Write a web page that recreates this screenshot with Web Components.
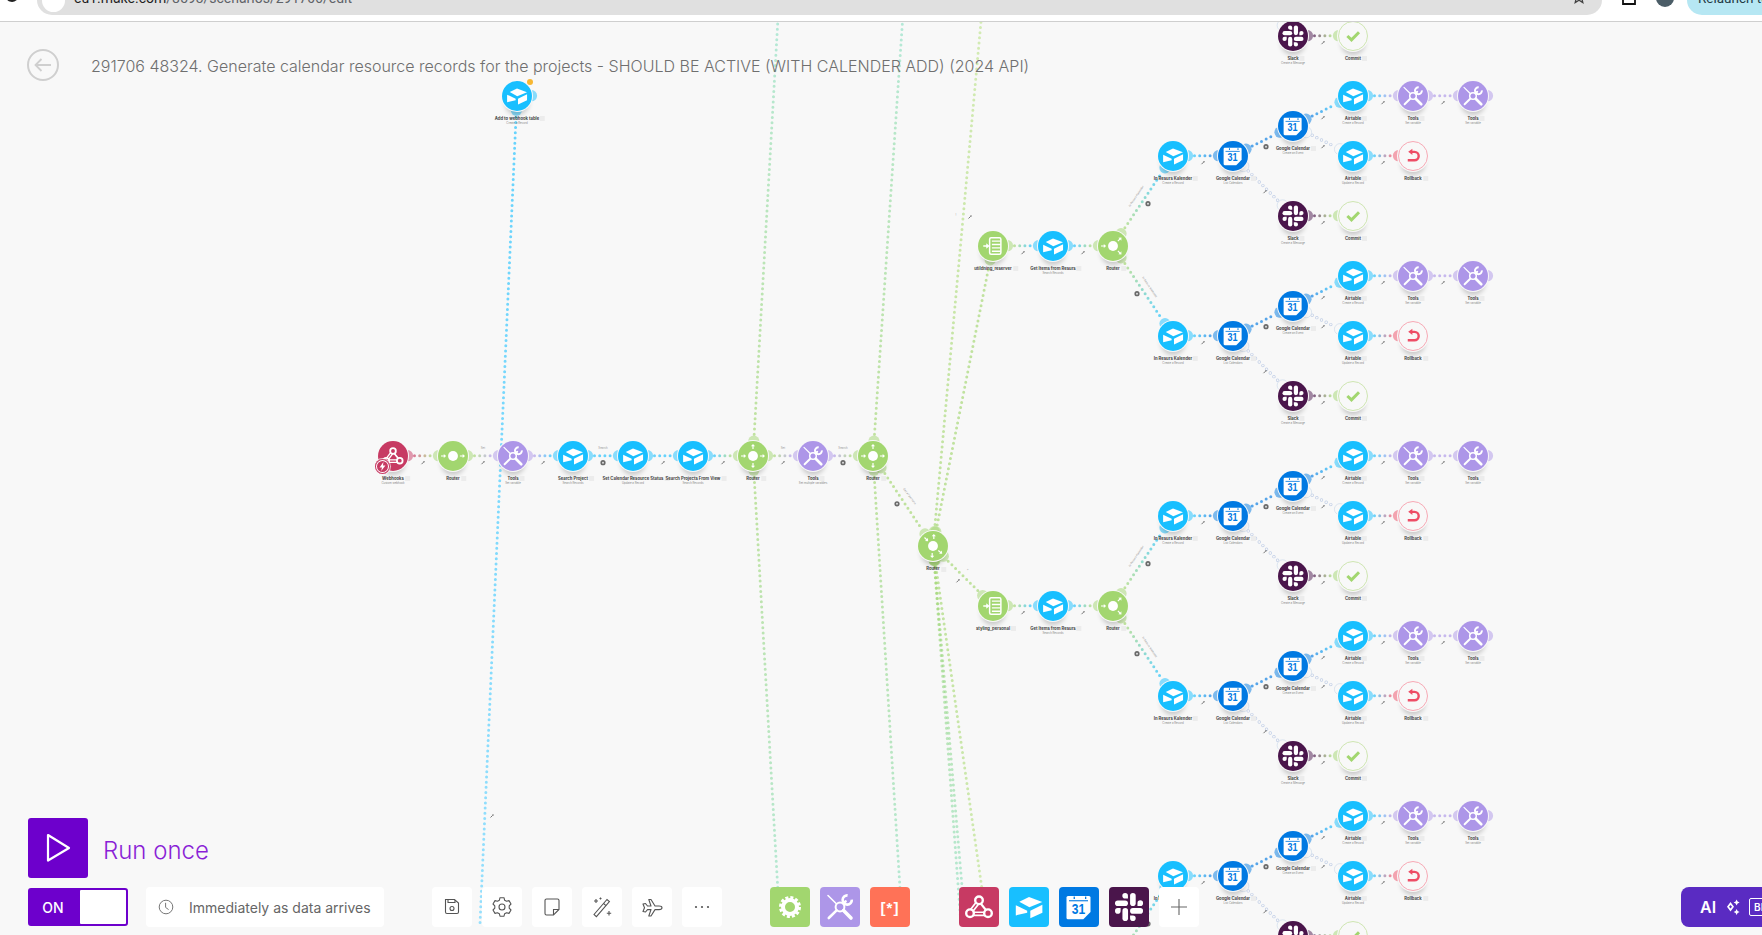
<!DOCTYPE html>
<html>
	<head>
		<meta charset="utf-8">
		<title>Scenario editor</title>
		<style type="text/css">
			html, body {
				margin: 0;
				height: 100%;
				overflow: hidden;
				background: #f8f8f8;
			}
			body {
				display: flex;
				flex-direction: column;
				font-family: Inter, "Liberation Sans", sans-serif;
			}
		</style>
	</head>
	<body>

		<browser-strip url="eu1.make.com" path="/8593/scenarios/291706/edit"></browser-strip>

		<scenario-editor>
			<flow-canvas slot="canvas"></flow-canvas>
			<editor-title slot="header">291706 48324. Generate calendar resource records for the projects - SHOULD BE ACTIVE (WITH CALENDER ADD) (2024 API)</editor-title>
			<run-once slot="run">Run once</run-once>
			<schedule-toggle>ON</schedule-toggle>
			<schedule-box>Immediately as data arrives</schedule-box>
			<tool-tile kind="save" style="margin-left: 38px"></tool-tile>
			<tool-tile kind="settings"></tool-tile>
			<tool-tile kind="note"></tool-tile>
			<tool-tile kind="wand"></tool-tile>
			<tool-tile kind="plane"></tool-tile>
			<tool-tile kind="more"></tool-tile>
			<module-tile kind="gear" style="margin-left: 38px"></module-tile>
			<module-tile kind="tools"></module-tile>
			<module-tile kind="json"></module-tile>
			<module-tile kind="hook" style="margin-left: 39px"></module-tile>
			<module-tile kind="air"></module-tile>
			<module-tile kind="gcal"></module-tile>
			<module-tile kind="slack"></module-tile>
			<tool-tile kind="plus"></tool-tile>
			<ai-button>AI</ai-button>
		</scenario-editor>


		<script>
			const FONT = 'Inter, "Liberation Sans", sans-serif';

			// Module colours
			const COLORS = {
				air: '#18bfff',
				gcal: '#0079e2',
				slack: '#4a154b',
				tools: '#ad96e8',
				router: '#a2d66f',
				agg: '#a2d66f',
				gear: '#a2d66f',
				commit: '#a2d66f',
				rollback: '#ee4d66',
				hook: '#c73a63',
				json: '#ff7257'
			};

			// Module icons, all on a 40 unit box
			const ICONS = {
				air: `<g fill="#fff">
					<path d="M20 10 33.3 15 20.4 20.3 10.3 14.7z"/>
					<path d="M6.8 18.2 18.2 23.8V25.7L6.8 28.4z"/>
					<path d="M21.3 23.8 33.4 17.8V25.8L21.3 31.2z"/>
				</g>`,
				gcal: `<path fill="#fff" d="M9 9H30A1.5 1.5 0 0 1 31.5 10.5V25L24.3 32.3H9A1.5 1.5 0 0 1 7.5 30.8V10.5A1.5 1.5 0 0 1 9 9z"/>
					<rect x="10" y="13.2" width="19" height="1.1" fill="#0079e2"/>
					<rect x="14.6" y="9.6" width="1.3" height="2.4" fill="#0079e2"/>
					<rect x="26" y="9.6" width="1.3" height="2.4" fill="#0079e2"/>
					<text x="12.7" y="26.7" textLength="13.4" lengthAdjust="spacingAndGlyphs" font-size="15" font-weight="700" fill="#0079e2" font-family="'Liberation Sans', sans-serif">31</text>`,
				slack: `<g fill="#fff" transform="translate(6 6) scale(.52)">
					<rect x="0" y="14.3" width="24.9" height="10.8" rx="5.4"/>
					<path d="M24.9 10.8H19.5A5.4 5.4 0 1 1 24.9 5.4z"/>
					<rect x="29" y="0" width="10.8" height="24.9" rx="5.4"/>
					<path d="M43.2 24.9V19.5A5.4 5.4 0 1 1 48.6 24.9z"/>
					<rect x="29" y="29" width="24.9" height="10.8" rx="5.4"/>
					<path d="M29 43.2H34.4A5.4 5.4 0 1 1 29 48.6z"/>
					<rect x="14.3" y="29" width="10.8" height="24.9" rx="5.4"/>
					<path d="M10.8 29V34.4A5.4 5.4 0 1 1 5.4 29z"/>
				</g>`,
				tools: `<g fill="none" stroke="#fff" stroke-linecap="round">
					<circle cx="20" cy="20" r="4.4" stroke-width="2"/>
					<path d="M8 8.5 16.6 17" stroke-width="1.6"/>
					<path d="M23.6 23.6 31 31" stroke-width="3.6"/>
					<path d="M8.8 31 16.6 23.4" stroke-width="2.6"/>
					<path d="M23.4 16.6 25.6 14.4" stroke-width="2.6"/>
					<path d="M27.6 8.4A4.6 4.6 0 1 0 31.8 12.6" stroke-width="2.6" stroke-linecap="butt"/>
				</g>`,
				agg: `<g fill="none" stroke="#fff">
					<rect x="15.5" y="9" width="15" height="22" rx="2" stroke-width="2"/>
					<path d="M18.5 13.5H30M18.5 18H30M18.5 22.5H30M18.5 27H30" stroke-width="1.8"/>
				</g>
				<path fill="#fff" d="M7 19H11V16.4L15.5 20 11 23.6V21H7z"/>`,
				commit: `<path fill="none" stroke="#a2d66f" stroke-width="4" d="M12.5 20 18 25.2 28 15"/>`,
				rollback: `<path fill="none" stroke="#ee4d66" stroke-width="3.2" d="M17 14.5H22A5.6 5.6 0 0 1 22 25.7H13"/>
					<path fill="#ee4d66" d="M19.2 10.2V18.6L13.6 14.4z"/>`,
				hook: `<g fill="none" stroke="#fff" stroke-linecap="round">
					<path d="M18 16.6 12 24.4M14 26.8H26" stroke-width="4.8"/>
					<path d="M18 16.6 12 24.4M14 26.8H26" stroke="#c73a63" stroke-width="1.4"/>
					<path d="M21.8 16.6 27.4 23.6" stroke-width="2.3"/>
					<circle cx="20" cy="13.3" r="3.8" fill="#c73a63" stroke-width="2.4"/>
					<circle cx="11" cy="26.2" r="3.8" fill="#c73a63" stroke-width="2.4"/>
					<circle cx="29" cy="26.2" r="3.8" fill="#c73a63" stroke-width="2.4"/>
				</g>`,
				gear: `<g fill="none" stroke="#fff">
					<circle cx="20" cy="20" r="9.2" stroke-width="3.6" stroke-dasharray="2.9 1.92"/>
					<circle cx="20" cy="20" r="7" stroke-width="4"/>
				</g>`,
				json: `<text x="20" y="25.5" text-anchor="middle" font-size="15" letter-spacing="1" font-weight="700" fill="#fff" font-family="'Liberation Sans', sans-serif">[*]</text>`
			};

			// Outline icons of the bottom toolbar
			const TOOL_ICONS = {
				save: `<path d="M4.5 3.5H13.5L17.5 7V16A1.5 1.5 0 0 1 16 17.5H6A1.5 1.5 0 0 1 4.5 16z"/><path d="M7 3.5V6.5H14V4"/><circle cx="11" cy="12.5" r="2"/>`,
				settings: `<path d="M9 2.5H13L13.6 5 15.6 6.1 18 5.4 20 8.8 18.2 10.6V13L20 14.8 18 18.2 15.6 17.5 13.6 18.6 13 21H9L8.4 18.6 6.4 17.5 4 18.2 2 14.8 3.8 13V10.6L2 8.8 4 5.4 6.4 6.1 8.4 5z" stroke-linejoin="round" transform="translate(0 -.8)"/><circle cx="11" cy="11" r="3"/>`,
				note: `<path d="M5.5 3H16.5A1.5 1.5 0 0 1 18 4.5V13.5L12.5 19H5.5A1.5 1.5 0 0 1 4 17.5V4.5A1.5 1.5 0 0 1 5.5 3z"/><path d="M12.5 19V13.5H18"/>`,
				wand: `<path d="M3 18.5 16 3.5 18.4 5.6 5.4 20.6z"/><path d="M12.6 7.5 15 9.6"/><path d="M5 3V7M3 5H7M18 15V19.5M15.8 17.2H20.2M9.5 1.5V3.5M8.5 2.5H10.5"/>`,
				plane: `<path d="M2 8 4.5 7.5 6.5 10H10L7.8 3.5H10L14 10H18C19.8 10 21 10.8 21 11.8S19.8 13.6 18 13.6H14L10 20H7.8L10 13.6H6.5L4.5 16 2 15.5 3.5 11.8z" stroke-linejoin="round"/>`,
				more: `<g fill="#555" stroke="none"><circle cx="5" cy="11" r="1.1"/><circle cx="11" cy="11" r="1.1"/><circle cx="17" cy="11" r="1.1"/></g>`,
				plus: `<path d="M11 3V19M3 11H19" stroke="#666"/>`
			};

			class BrowserStrip extends HTMLElement {

				/**
				 * The constructor object
				 */
				constructor () {
					super();
					this.root = this.attachShadow({mode: 'open'});
					this.root.innerHTML =
						`<style>
							:host {
								display: flex;
								flex: none;
								height: 21px;
								overflow: hidden;
								align-items: flex-end;
								background: #fff;
								border-bottom: 1px solid #cfcfcf;
								font: 14px Roboto, "Liberation Sans", sans-serif;
								position: relative;
								z-index: 3;
							}
							.reload {
								width: 37px;
								flex: none;
								padding-left: 4px;
								box-sizing: border-box;
								margin-bottom: 18px;
								line-height: 0;
							}
							.pill {
								width: 1565px;
								height: 30px;
								flex: none;
								background: #e0e0e0;
								border-radius: 15px;
								margin-bottom: 6px;
								display: flex;
								align-items: center;
								padding-left: 5px;
								box-sizing: border-box;
								gap: 9px;
								color: #5f6368;
								padding-right: 16px;
							}
							.dot {
								width: 23px;
								height: 23px;
								flex: none;
								background: #fff;
								border-radius: 50%;
							}
							.url { flex: 1; padding-bottom: 4px; }
							b { font-weight: 400; color: #1f1f1f; }
							.acts {
								flex: none;
								display: flex;
								align-items: flex-end;
								gap: 20px;
								padding-left: 20px;
								width: 85px;
								box-sizing: border-box;
							}
							.avatar {
								width: 18px;
								height: 18px;
								flex: none;
								border-radius: 50%;
								background: #4b5d67;
								margin-bottom: 14px;
							}
							.box { margin-bottom: 16px; flex: none; }
							.relaunch {
								flex: none;
								width: 75px;
								height: 30px;
								margin-bottom: 6px;
								background: #b6e7f3;
								border-radius: 15px 0 0 15px;
								padding: 0 0 5px 11px;
								box-sizing: border-box;
								display: flex;
								align-items: center;
								white-space: nowrap;
								overflow: hidden;
								color: #1f3a44;
								font-size: 13.5px;
							}
						</style>
						<div class="reload"><svg width="16" height="16" viewBox="0 0 16 16" fill="none" stroke="#222" stroke-width="1.8"><path d="M14 8A6 6 0 1 1 11 2.8"/></svg></div>
						<div class="pill">
							<span class="dot"></span>
							<span class="url"><b>${this.getAttribute('url')}</b>${this.getAttribute('path')}</span>
							<svg width="14" height="14" viewBox="0 0 14 14" fill="none" stroke="#444" stroke-width="1.3" style="margin-bottom:6px"><path d="M7 1 8.8 5 13 5.4 9.8 8.2 10.8 12.6 7 10.2 3.2 12.6 4.2 8.2 1 5.4 5.2 5z"/></svg>
						</div>
						<div class="acts">
							<svg class="box" width="14" height="14" viewBox="0 0 14 14" fill="none" stroke="#111" stroke-width="1.8"><path d="M1 7V13H13V7M7 9V1"/></svg>
							<span class="avatar"></span>
						</div>
						<div class="relaunch">Relaunch to update</div>`;
				}

			}

			class ScenarioEditor extends HTMLElement {

				/**
				 * The constructor object
				 */
				constructor () {
					super();
					this.root = this.attachShadow({mode: 'open'});
					this.root.innerHTML =
						`<style>
							:host {
								display: flex;
								flex: 1;
								flex-direction: column;
								position: relative;
								overflow: hidden;
								background: #f8f8f8;
								padding: 27px 0 8px 27px;
								min-height: 0;
							}
							.head, .foot { position: relative; z-index: 2; }
							.head { flex: 1; }
							.foot { padding-left: 1px; }
							.bar {
								display: flex;
								align-items: center;
								gap: 10px;
								width: 1800px;
								height: 40px;
							}
						</style>
						<slot name="canvas"></slot>
						<div class="head"><slot name="header"></slot></div>
						<div class="foot">
							<slot name="run"></slot>
							<div class="bar"><slot></slot></div>
						</div>`;
				}

			}

			class EditorTitle extends HTMLElement {

				/**
				 * The constructor object
				 */
				constructor () {
					super();
					this.root = this.attachShadow({mode: 'open'});
					this.root.innerHTML =
						`<style>
							:host {
								display: flex;
								align-items: center;
								gap: 32px;
								height: 32px;
								white-space: nowrap;
								font: 300 16px ${FONT};
								color: #6f6f6f;
							}
							span { padding-top: 1px; }
						</style>
						<svg width="32" height="32" viewBox="0 0 32 32" fill="none" stroke="#cfcfcf" stroke-width="2">
							<circle cx="16" cy="16" r="15"/>
							<path d="M24 16H8.5M14.5 10 8.5 16 14.5 22" stroke-width="1.8"/>
						</svg>
						<span><slot></slot></span>`;
				}

			}

			class RunOnce extends HTMLElement {

				/**
				 * The constructor object
				 */
				constructor () {
					super();
					this.root = this.attachShadow({mode: 'open'});
					this.root.innerHTML =
						`<style>
							:host {
								display: flex;
								align-items: center;
								gap: 15px;
								margin-bottom: 9px;
								font: 300 24px ${FONT};
								color: #8a1fd6;
							}
							.go {
								width: 60px;
								height: 60px;
								background: #6d00cc;
								border-radius: 3px;
							}
							span { padding-top: 4px; }
						</style>
						<div class="go">
							<svg width="60" height="60" viewBox="0 0 60 60" fill="none" stroke="#fff" stroke-width="2.2" stroke-linejoin="round"><path d="M20 17 41 30 20 42.5z"/></svg>
						</div>
						<span><slot></slot></span>`;
				}

			}

			class ScheduleToggle extends HTMLElement {

				/**
				 * The constructor object
				 */
				constructor () {
					super();
					this.root = this.attachShadow({mode: 'open'});
					this.root.innerHTML =
						`<style>
							:host {
								display: flex;
								width: 100px;
								height: 38px;
								box-sizing: border-box;
								flex: none;
								margin-right: 8px;
								background: #6d00cc;
								border: 2px solid #6d00cc;
								border-radius: 3px;
								font: 500 14px ${FONT};
								color: #fff;
							}
							span {
								flex: 1;
								display: flex;
								align-items: center;
								justify-content: center;
								padding-right: 4px;
							}
							i {
								width: 46px;
								background: #fff;
								border-radius: 1px;
							}
						</style>
						<span><slot></slot></span><i></i>`;
				}

			}

			class ScheduleBox extends HTMLElement {

				/**
				 * The constructor object
				 */
				constructor () {
					super();
					this.root = this.attachShadow({mode: 'open'});
					this.root.innerHTML =
						`<style>
							:host {
								display: flex;
								align-items: center;
								gap: 15px;
								width: 238px;
								height: 40px;
								flex: none;
								box-sizing: border-box;
								padding-left: 12px;
								background: #fff;
								border-radius: 4px;
								font: 400 14px ${FONT};
								color: #666;
								white-space: nowrap;
							}
						</style>
						<svg width="16" height="16" viewBox="0 0 16 16" fill="none" stroke="#777" stroke-width="1"><circle cx="8" cy="8" r="6.8"/><path d="M7.6 3.8V8.4L10.6 10.6"/></svg>
						<span><slot></slot></span>`;
				}

			}

			class ToolTile extends HTMLElement {

				/**
				 * The constructor object
				 */
				constructor () {
					super();
					this.root = this.attachShadow({mode: 'open'});
					let kind = this.getAttribute('kind');
					this.root.innerHTML =
						`<style>
							:host {
								display: flex;
								align-items: center;
								justify-content: center;
								width: 40px;
								height: 40px;
								flex: none;
								background: #fff;
								border-radius: 4px;
							}
						</style>
						<svg width="22" height="22" viewBox="0 0 22 22" fill="none" stroke="#555" stroke-width="1.1">${TOOL_ICONS[kind]}</svg>`;
				}

			}

			class ModuleTile extends HTMLElement {

				/**
				 * The constructor object
				 */
				constructor () {
					super();
					this.root = this.attachShadow({mode: 'open'});
					let kind = this.getAttribute('kind');
					this.root.innerHTML =
						`<style>
							:host {
								display: block;
								width: 40px;
								height: 40px;
								flex: none;
								background: ${COLORS[kind]};
								border-radius: 4px;
							}
							svg { display: block; }
						</style>
						<svg width="40" height="40" viewBox="0 0 40 40">${ICONS[kind]}</svg>`;
				}

			}

			class AiButton extends HTMLElement {

				/**
				 * The constructor object
				 */
				constructor () {
					super();
					this.root = this.attachShadow({mode: 'open'});
					this.root.innerHTML =
						`<style>
							:host {
								display: flex;
								align-items: center;
								gap: 8px;
								flex: none;
								margin-left: 472px;
								width: 120px;
								height: 40px;
								box-sizing: border-box;
								padding-left: 19px;
								background: #5a2bc2;
								border-radius: 8px 0 0 8px;
								font: 600 16px ${FONT};
								color: #fff;
							}
							.beta {
								border: 1px solid #fff;
								border-radius: 2px;
								font-size: 10px;
								padding: 2px 4px;
								margin-left: 0;
							}
						</style>
						<span><slot></slot></span>
						<svg width="17" height="17" viewBox="0 0 17 17" fill="#fff"><path d="M6.5 3 10 7.8 6.5 12.6 3 7.8z M6.5 6 5 7.8 6.5 9.6 8 7.8z" fill-rule="evenodd"/><path d="M12.6 .6 13.6 2.6 15.6 3.6 13.6 4.6 12.6 6.6 11.6 4.6 9.6 3.6 11.6 2.6z"/><path d="M12.6 10 13.6 12 15.6 13 13.6 14 12.6 16 11.6 14 9.6 13 11.6 12z"/></svg>
						<span class="beta">BETA</span>`;
				}

			}

			class FlowNode extends HTMLElement {

				/**
				 * The constructor object
				 */
				constructor () {
					super();
					this.root = this.attachShadow({mode: 'open'});
				}

				/**
				 * Build the router icon from its list of arrows
				 * @param  {String} list The arrows, as position:direction in degrees
				 * @return {String}      The SVG markup
				 */
				#routerIcon (list) {
					let arrows = (list || '').split(',').filter(Boolean).map(function (item) {
						let [pos, dir] = item.split(':').map(Number);
						let x = 20 + 12.6 * Math.cos(pos * Math.PI / 180);
						let y = 20 + 12.6 * Math.sin(pos * Math.PI / 180);
						return `<g transform="translate(${x.toFixed(1)} ${y.toFixed(1)}) rotate(${dir})"><path d="M-3.4 -.8H.3V-2.8L3.4 0 .3 2.8V.8H-3.4z" fill="#fff"/></g>`;
					});
					return `<circle cx="20" cy="20" r="6.6" fill="#fff"/>` + arrows.join('');
				}

				/**
				 * Runs each time the element is appended to or moved in the DOM
				 */
				connectedCallback () {
					let kind = this.getAttribute('kind');
					let outline = kind === 'commit' || kind === 'rollback';
					let ring = kind === 'commit' ? '#cfe6b2' : '#f7a9b5';
					let icon = kind === 'router' ? this.#routerIcon(this.getAttribute('arrows')) : ICONS[kind];
					let sub = this.getAttribute('sub');
					this.root.innerHTML =
						`<style>
							:host {
								position: absolute;
								width: 30px;
								height: 30px;
							}
							.disc {
								width: 30px;
								height: 30px;
								box-sizing: border-box;
								border-radius: 50%;
								background: ${outline ? '#f8f8f8' : COLORS[kind]};
								border: ${outline ? '1px solid ' + ring : 'none'};
								box-shadow: 0 0 0 1px #f8f8f8, 0 7px 5px -3px rgba(0, 0, 0, .2);
							}
							svg { display: block; margin: ${outline ? '-1px' : '0'}; }
							.name {
								position: absolute;
								left: 50%;
								top: 35px;
								transform: translateX(-50%);
								white-space: nowrap;
								font: 700 4.2px/6px ${FONT};
								color: #444;
							}
							.name i {
								position: absolute;
								left: calc(100% + 1px);
								top: .5px;
								width: 5px;
								height: 5px;
								background: #ececec;
							}
							.sub {
								position: absolute;
								left: 50%;
								top: 41px;
								transform: translateX(-50%);
								white-space: nowrap;
								font: 400 2.8px/3px ${FONT};
								color: #888;
							}
							.pip {
								position: absolute;
								right: -1px;
								top: -2px;
								width: 6px;
								height: 6px;
								border-radius: 50%;
								background: #f7b733;
							}
							.bolt {
								position: absolute;
								left: -3px;
								top: 18px;
								width: 15px;
								height: 15px;
								border-radius: 50%;
								background: #c73a63;
								box-shadow: inset 0 0 0 1px #c73a63, inset 0 0 0 2px #fff, 0 0 0 1px rgba(248, 248, 248, .7);
							}
							.bolt svg { margin: 1px; }
						</style>
						<div class="disc"><svg width="30" height="30" viewBox="0 0 40 40">${icon}</svg></div>
						${this.hasAttribute('pip') ? '<span class="pip"></span>' : ''}
						${this.hasAttribute('instant') ? '<span class="bolt"><svg width="13" height="13" viewBox="0 0 13 13"><path fill="#fff" d="M7.4 2 3.6 7.4H6L5.2 11 9.4 5.6H7z"/></svg></span>' : ''}
						<div class="name">${this.getAttribute('label')}<i></i></div>
						${sub ? `<div class="sub">${sub}</div>` : ''}`;
				}

			}

			class FlowCanvas extends HTMLElement {

				#defs = [];
				#gradients = 0;
				#back = [];
				#marks = [];

				/**
				 * The constructor object
				 */
				constructor () {
					super();
					this.root = this.attachShadow({mode: 'open'});
				}

				/**
				 * Get a gradient along a line, in page coordinates
				 * @return {String} The reference to the gradient
				 */
				#gradient (x1, y1, x2, y2, from, to) {
					let id = 'g' + (this.#gradients++);
					this.#defs.push(`<linearGradient id="${id}" gradientUnits="userSpaceOnUse" x1="${x1}" y1="${y1}" x2="${x2}" y2="${y2}"><stop offset="0" stop-color="${from}"/><stop offset="1" stop-color="${to}"/></linearGradient>`);
					return `url(#${id})`;
				}

				/**
				 * Draw a dotted link and its two sockets
				 * @param  {Object} a    The start, with x, y and colour
				 * @param  {Object} b    The end, with x, y and colour
				 * @param  {Object} opts ring, wrench, filter, text, and noA/noB to leave out a socket
				 */
				#link (a, b, opts = {}) {
					let dx = b.x - a.x;
					let dy = b.y - a.y;
					let len = Math.hypot(dx, dy);
					let ux = dx / len;
					let uy = dy / len;
					let x1 = a.x + ux * 21.5;
					let y1 = a.y + uy * 21.5;
					let x2 = b.x - ux * 21.5;
					let y2 = b.y - uy * 21.5;
					let mx = (a.x + b.x) / 2;
					let my = (a.y + b.y) / 2;
					let line = `x1="${x1.toFixed(1)}" y1="${y1.toFixed(1)}" x2="${x2.toFixed(1)}" y2="${y2.toFixed(1)}" fill="none" stroke-linecap="round"`;

					if (opts.ring) {
						this.#back.push(`<line ${line} stroke="#bfcde6" stroke-width="3.4" stroke-dasharray="0 5.2"/>`);
						this.#back.push(`<line ${line} stroke="#f8f8f8" stroke-width="2" stroke-dasharray="0 5.2"/>`);
					} else {
						let paint = this.#gradient(x1, y1, x2, y2, a.c, b.c);
						this.#back.push(`<line ${line} stroke="${paint}" stroke-opacity=".65" stroke-width="3" stroke-dasharray="0 5.2"/>`);
					}

					[[a, 1, opts.noA], [b, -1, opts.noB]].forEach(function ([end, sign, skip]) {
						if (skip) return;
						let cx = (end.x + sign * ux * 14.5).toFixed(1);
						let cy = (end.y + sign * uy * 14.5).toFixed(1);
						if (opts.ring) {
							this.#back.push(`<circle cx="${cx}" cy="${cy}" r="5.6" fill="#f8f8f8" stroke="#c7d6ea" stroke-width=".6"/>`);
						} else {
							this.#back.push(`<circle cx="${cx}" cy="${cy}" r="5.6" fill="${end.c}" fill-opacity=".5"/>`);
						}
					}, this);

					if (opts.wrench !== false) this.#wrench(mx + (opts.wx || 0), my + (opts.wy === undefined ? 7 : opts.wy));
					if (opts.filter) this.#filter(mx + opts.filter[0], my + opts.filter[1]);
					if (opts.tag) this.#tag(mx + opts.tag[0], my + opts.tag[1], opts.tag[2], opts.tag[3]);
				}

				/**
				 * Draw the small wrench under a link
				 */
				#wrench (x, y) {
					this.#marks.push(`<path d="M${x - 1.5} ${y + 1.5}L${x + .6} ${y - .6}" stroke="#666" stroke-width=".9"/><circle cx="${x + 1}" cy="${y - 1}" r=".8" fill="#777"/>`);
				}

				/**
				 * Draw the round filter mark of a link
				 */
				#filter (x, y) {
					this.#marks.push(`<circle cx="${x}" cy="${y}" r="2.6" fill="#6a6a6a"/><circle cx="${x}" cy="${y}" r="1" fill="#ddd"/>`);
				}

				/**
				 * Draw the tiny label of a link
				 */
				#tag (x, y, text, angle) {
					this.#marks.push(`<text transform="translate(${x} ${y}) rotate(${angle})" text-anchor="middle" font-size="2.8" fill="#999" font-family='${FONT}'>${text}</text>`);
				}

				/**
				 * Place a module on the canvas
				 * @return {Object} Its centre and colour, for the links
				 */
				#node (kind, x, y, label, sub, extra = {}) {
					let node = document.createElement('flow-node');
					node.setAttribute('kind', kind);
					node.setAttribute('label', label);
					if (sub) node.setAttribute('sub', sub);
					for (let key in extra) node.setAttribute(key, extra[key]);
					node.style.left = (x - 15) + 'px';
					node.style.top = (y - 22 - 15) + 'px';
					this.nodes.push(node);
					return {x: x, y: y, c: COLORS[kind]};
				}

				/**
				 * Draw one calendar tree, hanging from a branch router
				 * @param  {Number} y      The row of its first Airtable module
				 * @param  {Object} router The branch router
				 * @param  {Number} side   -1 when the router lies below the tree, 1 when above
				 * @param  {String} name   The name of its first module
				 */
				#tree (y, router, side, name) {
					let first = this.#node('air', 1173, y, name, 'Create a Record');
					let cal = this.#node('gcal', 1233, y, 'Google Calendar', 'List Calendars');
					let event = this.#node('gcal', 1293, y - 30, 'Google Calendar', 'Create an Event');
					let top = this.#node('air', 1353, y - 60, 'Airtable', 'Create a Record');
					let tools = this.#node('tools', 1413, y - 60, 'Tools', 'Set variable');
					let last = this.#node('tools', 1473, y - 60, 'Tools', 'Set variable');
					let low = this.#node('air', 1353, y, 'Airtable', 'Update a Record');
					let back = this.#node('rollback', 1413, y, 'Rollback');
					let slack = this.#node('slack', 1293, y + 60, 'Slack', 'Create a Message');
					let commit = this.#node('commit', 1353, y + 60, 'Commit');

					let angle = side < 0 ? -56 : 56;
					this.#link(router, first, {
						wrench: false,
						filter: side < 0 ? [5, 3] : [-6, 3],
						tag: side < 0 ? [-6, -4, name, angle] : [6, -3, name, angle]
					});
					this.#link(first, cal);
					this.#link(cal, event, {filter: [3, 6], wrench: false});
					this.#link(event, top);
					this.#link(top, tools);
					this.#link(tools, last);
					this.#link(event, low, {ring: true, wy: 6});
					this.#link(low, back);
					this.#link(cal, slack, {ring: true, wx: 2, wy: 6});
					this.#link(slack, commit);

					this.#back.push(`<circle cx="${last.x + 14.5}" cy="${last.y}" r="5.6" fill="${COLORS.tools}" fill-opacity=".5"/>`);
				}

				/**
				 * Runs each time the element is appended to or moved in the DOM
				 */
				connectedCallback () {
					this.nodes = [];

					// The main row
					let row = 455.7;
					let hook = this.#node('hook', 393, row, 'Webhooks', 'Custom webhook', {instant: ''});
					let r1 = this.#node('router', 453, row, 'Router', '', {arrows: '180:0,0:0'});
					let t1 = this.#node('tools', 513, row, 'Tools', 'Set variable');
					let a1 = this.#node('air', 573, row, 'Search Project', 'Search Records');
					let a2 = this.#node('air', 633, row, 'Set Calendar Resource Status', 'Update a Record');
					let a3 = this.#node('air', 693, row, 'Search Projects From View', 'Search Records');
					let r2 = this.#node('router', 753, row, 'Router', '', {arrows: '180:0,0:0,-90:-90,90:90'});
					let t2 = this.#node('tools', 813, row, 'Tools', 'Set multiple variables');
					let r3 = this.#node('router', 873, row, 'Router', '', {arrows: '180:0,0:0,-90:-90,90:90'});
					let hub = this.#node('router', 933, 546, 'Router', '', {arrows: '-135:45,-85:-90,40:40,95:90'});

					// The first table, above the row
					let table = this.#node('air', 517, 95.7, 'Add to webhook table', 'Create a Record', {pip: ''});
					this.#back.push(`<circle cx="531.5" cy="95.7" r="5.6" fill="${COLORS.air}" fill-opacity=".5"/>`);

					// The two branches on the right
					let agg1 = this.#node('agg', 993, 245.7, 'utildning_reserver');
					let get1 = this.#node('air', 1053, 245.7, 'Get Items from Resurs', 'Search Records');
					let r4 = this.#node('router', 1113, 245.7, 'Router', '', {arrows: '180:0,-45:-45,45:45'});
					let agg2 = this.#node('agg', 993, 605.7, 'styling_personal');
					let get2 = this.#node('air', 1053, 605.7, 'Get Items from Resurs', 'Search Records');
					let r5 = this.#node('router', 1113, 605.7, 'Router', '', {arrows: '180:0,-45:-45,45:45'});

					this.#link(hook, r1);
					this.#link(r1, t1, {tag: [0, -6.5, 'Set', 0]});
					this.#link(t1, a1);
					this.#link(a1, a2, {filter: [0, 7], wrench: false, tag: [0, -6.5, 'Search', 0]});
					this.#link(a2, a3);
					this.#link(a3, r2);
					this.#link(r2, t2, {tag: [0, -6.5, 'Set', 0]});
					this.#link(t2, r3, {filter: [0, 7], wrench: false, tag: [0, -6.5, 'Search', 0]});
					this.#link(r3, hub, {wrench: false, filter: [-6, 3], tag: [6, -4, 'Get all persons', 53]});
					this.#link(agg1, get1);
					this.#link(get1, r4);
					this.#link(agg2, get2);
					this.#link(get2, r5);
					this.#link(hub, agg2, {wx: -5, wy: 5, tag: [4, -6, '×', 50]});
					this.#link(hub, agg1, {wrench: false});

					// The long links that run off the canvas
					const TEAL = '#8fe0c6';
					const BLUE = '#62d2ff';
					const SOFT = '#bfe48f';
					this.#link(table, {x: 479, y: 945, c: BLUE}, {noB: true, wrench: false});
					this.#wrench(492, 816);
					this.#link(r2, {x: 779, y: 0, c: TEAL}, {noB: true, wrench: false});
					this.#link(r2, {x: 781, y: 945, c: TEAL}, {noB: true, wrench: false});
					this.#link(r3, {x: 904, y: 0, c: TEAL}, {noB: true, wrench: false});
					this.#link(r3, {x: 903.5, y: 945, c: TEAL}, {noB: true, wrench: false});
					this.#link(hub, {x: 983, y: 0, c: SOFT}, {noB: true, wrench: false});
					this.#link(hub, {x: 962.5, y: 945, c: TEAL}, {noB: true, wrench: false});
					this.#link(hub, {x: 967, y: 945, c: TEAL}, {noB: true, wrench: false});
					this.#link(hub, {x: 990, y: 945, c: SOFT}, {noB: true, wrench: false});
					this.#wrench(970, 217);
					this.#tag(956, 216, '!', 0);

					// The repeating calendar trees
					let far = {x: 1113, y: -114, c: COLORS.router};
					let end = {x: 1113, y: 966, c: COLORS.router};
					this.#tree(-24.3, far, 1, 'In Resurs Kalender');
					this.#tree(155.7, r4, -1, 'In Resurs Kalender');
					this.#tree(335.7, r4, 1, 'In Resurs Kalender');
					this.#tree(515.7, r5, -1, 'In Resurs Kalender');
					this.#tree(695.7, r5, 1, 'In Resurs Kalender');
					this.#tree(875.7, end, -1, 'In Resurs Kalender');

					this.root.innerHTML =
						`<style>
							:host {
								position: absolute;
								inset: 0;
								overflow: hidden;
							}
							svg {
								position: absolute;
								left: 0;
								top: -22px;
							}
						</style>
						<svg width="1762" height="957" viewBox="0 0 1762 957">
							<defs>${this.#defs.join('')}</defs>
							${this.#back.join('')}
							${this.#marks.join('')}
						</svg>`;
					this.nodes.forEach(node => this.root.append(node));
				}

			}

			if ('customElements' in window) {
				customElements.define('browser-strip', BrowserStrip);
				customElements.define('scenario-editor', ScenarioEditor);
				customElements.define('editor-title', EditorTitle);
				customElements.define('run-once', RunOnce);
				customElements.define('schedule-toggle', ScheduleToggle);
				customElements.define('schedule-box', ScheduleBox);
				customElements.define('tool-tile', ToolTile);
				customElements.define('module-tile', ModuleTile);
				customElements.define('ai-button', AiButton);
				customElements.define('flow-node', FlowNode);
				customElements.define('flow-canvas', FlowCanvas);
			}
		</script>
	</body>
</html>
